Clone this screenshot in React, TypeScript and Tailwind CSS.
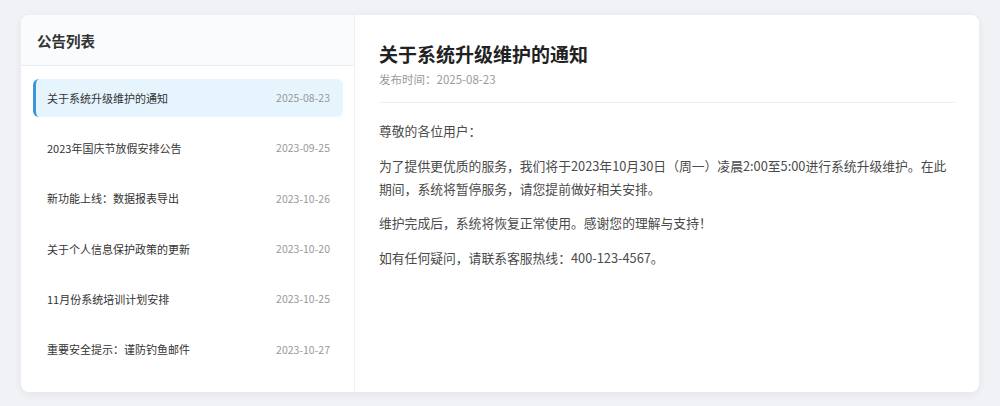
import React, { useState } from 'react';

type Notice = {
  id: number;
  title: string;
  date: string;
  body: string[];
};

const notices: Notice[] = [
  {
    id: 1,
    title: '关于系统升级维护的通知',
    date: '2025-08-23',
    body: [
      '尊敬的各位用户：',
      '为了提供更优质的服务，我们将于2023年10月30日（周一）凌晨2:00至5:00进行系统升级维护。在此期间，系统将暂停服务，请您提前做好相关安排。',
      '维护完成后，系统将恢复正常使用。感谢您的理解与支持！',
      '如有任何疑问，请联系客服热线：400-123-4567。',
    ],
  },
  { id: 2, title: '2023年国庆节放假安排公告', date: '2023-09-25', body: [] },
  { id: 3, title: '新功能上线：数据报表导出', date: '2023-10-26', body: [] },
  { id: 4, title: '关于个人信息保护政策的更新', date: '2023-10-20', body: [] },
  { id: 5, title: '11月份系统培训计划安排', date: '2023-10-25', body: [] },
  { id: 6, title: '重要安全提示：谨防钓鱼邮件', date: '2023-10-27', body: [] },
];

const NoticeBoard = () => {
  const [activeId, setActiveId] = useState<number>(1);
  const active = notices.find((n) => n.id === activeId) ?? notices[0];

  return (
    <div className="min-h-[406px] bg-[#f0f2f5] px-[21px] pt-[15px] pb-[14px] font-['Noto_Sans_CJK_SC','Noto_Sans',sans-serif]">
      <div className="flex h-[377px] overflow-hidden rounded-lg bg-white shadow-[0_2px_10px_rgba(0,0,0,0.06)]">
        {/* list */}
        <div className="flex w-[334px] shrink-0 flex-col border-r border-[#eef0f3]">
          <div className="flex h-[51px] items-center border-b border-[#ebedf0] bg-[#fafbfc] pt-[2px] pl-4">
            <h2 className="text-[14.5px] font-bold text-[#333]">公告列表</h2>
          </div>
          <ul className="flex flex-col gap-[12.3px] overflow-hidden pt-[13px] pr-[11px] pl-3">
            {notices.map((n) => {
              const selected = n.id === activeId;
              return (
                <li
                  key={n.id}
                  onClick={() => setActiveId(n.id)}
                  className={
                    selected
                      ? 'flex h-[38px] shrink-0 cursor-pointer items-center justify-between rounded-md border-l-[3px] border-[#3a97d8] bg-[#e5f4fd] pr-[13px] pl-[11px]'
                      : 'flex h-[38px] shrink-0 cursor-pointer items-center justify-between rounded-md border-l-[3px] border-transparent pr-[13px] pl-[11px]'
                  }
                >
                  <span className="text-[11px] text-[#333]">{n.title}</span>
                  <span className="text-[10.5px] text-[#999]">{n.date}</span>
                </li>
              );
            })}
          </ul>
        </div>

        {/* detail */}
        <div className="flex-1 px-6 pt-[25px]">
          <h1 className="text-[19px] leading-[27px] font-bold text-[#222]">{active.title}</h1>
          <p className="mt-[4px] text-[11.5px] leading-[17px] text-[#999]">发布时间：{active.date}</p>
          <div className="mt-[14px] border-t border-[#eceef1]" />
          <div className="pt-4 text-[12.8px] leading-[23px] text-[#4a4a4a]">
            {active.body.map((p, i) => (
              <p key={i} className="mb-[11.5px]">
                {p}
              </p>
            ))}
          </div>
        </div>
      </div>
    </div>
  );
};

export default function App() {
  return <NoticeBoard />;
}
